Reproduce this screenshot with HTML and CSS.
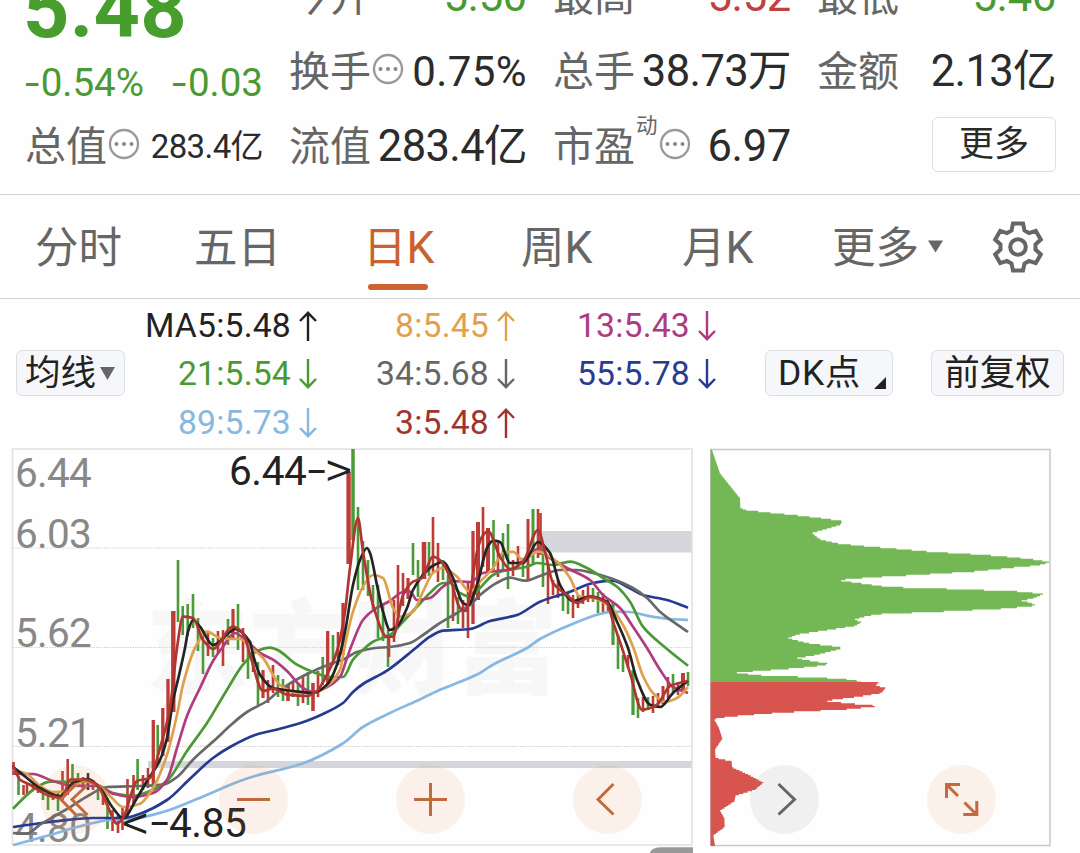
FILE: index.html
```html
<!DOCTYPE html>
<html lang="zh-CN">
<head>
<meta charset="utf-8">
<title>日K</title>
<link rel="stylesheet" href="styles.css">
</head>
<body>
<svg class="defs" width="0" height="0">
  <symbol id="up" viewBox="0 0 18 30"><path d="M9 30V2M1 10L9 1.8L17 10" fill="none" stroke="currentColor" stroke-width="2.4"/></symbol>
  <symbol id="down" viewBox="0 0 18 30"><path d="M9 0V28M1 20L9 28.2L17 20" fill="none" stroke="currentColor" stroke-width="2.4"/></symbol>
  <symbol id="dots" viewBox="0 0 32 32"><circle cx="16" cy="16" r="14" fill="none" stroke="#999" stroke-width="2.3"/><g fill="#888"><circle cx="8.5" cy="16" r="2"/><circle cx="16" cy="16" r="2"/><circle cx="23.5" cy="16" r="2"/></g></symbol>
</svg>

<header class="quote">
  <div class="price-col">
    <div class="price">5.48</div>
    <div class="change"><span class="pct"><i>-</i>0.54%</span><span><i>-</i>0.03</span></div>
    <div class="cell small"><span class="label">总值</span><svg class="info"><use href="#dots"/></svg><b>283.4亿</b></div>
  </div>
  <div class="col">
    <div class="cell"><span class="label">今开</span><b class="green">5.50</b></div>
    <div class="cell rate"><span class="label">换手</span><svg class="info"><use href="#dots"/></svg><b>0.75%</b></div>
    <div class="cell cap"><span class="label">流值</span><b>283.4亿</b></div>
  </div>
  <div class="col">
    <div class="cell"><span class="label">最高</span><b class="red">5.52</b></div>
    <div class="cell hands"><span class="label">总手</span><b>38.73万</b></div>
    <div class="cell"><span class="label">市盈</span><sup>动</sup><svg class="info"><use href="#dots"/></svg><b>6.97</b></div>
  </div>
  <div class="col">
    <div class="cell"><span class="label">最低</span><b class="green">5.46</b></div>
    <div class="cell hands"><span class="label">金额</span><b>2.13亿</b></div>
    <div class="cell end"><button class="more">更多</button></div>
  </div>
</header>

<nav class="tabs">
  <a class="t1">分时</a><a class="t2">五日</a><a class="t3 active">日<span class="k">K</span></a><a class="t4">周<span class="k">K</span></a><a class="t5">月<span class="k">K</span></a>
  <a class="t6">更多<svg class="caret" viewBox="0 0 16 13"><path d="M0 0H16L8 13Z" fill="#666"/></svg></a>
  <svg class="gear" viewBox="-26 -26 52 52"><g fill="none" stroke="#666" stroke-width="4"><path d="M-5-23.5H5L6.5-16.5L11-13.9L17.8-16.1L22.8-7.4L17.5-2.6V2.6L22.8 7.4L17.8 16.1L11 13.9L6.5 16.5L5 23.5H-5L-6.5 16.5L-11 13.9L-17.8 16.1L-22.8 7.4L-17.5 2.6V-2.6L-22.8-7.4L-17.8-16.1L-11-13.9L-6.5-16.5Z"/><circle r="7.8"/></g></svg>
</nav>

<section class="indicators">
  <button class="chip ma">均线<svg viewBox="0 0 15 13"><path d="M0 0H15L7.5 13Z" fill="#666"/></svg></button>
  <div class="ma-grid">
    <span class="c5">MA5:5.48<svg><use href="#up"/></svg></span>
    <span class="c8">8:5.45<svg><use href="#up"/></svg></span>
    <span class="c13">13:5.43<svg><use href="#down"/></svg></span>
    <span class="c21">21:5.54<svg><use href="#down"/></svg></span>
    <span class="c34">34:5.68<svg><use href="#down"/></svg></span>
    <span class="c55">55:5.78<svg><use href="#down"/></svg></span>
    <span class="c89">89:5.73<svg><use href="#down"/></svg></span>
    <span class="c3">3:5.48<svg><use href="#up"/></svg></span>
  </div>
  <button class="chip dk">DK点<svg viewBox="0 0 12 12"><path d="M12 0V12H0Z" fill="#222"/></svg></button>
  <button class="chip fq">前复权</button>
</section>

<main class="charts">
  <svg class="kline" viewBox="0 448 700 405">
    <text class="watermark" x="146" y="686" textLength="412">东方财富</text>
    <g class="grid"><path d="M13 548H692M13 647.5H692M13 746.5H692"/></g>
    <path class="band" d="M538 531H692V552.5H538ZM148 761H692V768H148Z"/>
    <path class="frame" d="M12.5 449H692V845H12.5Z"/>
    <g class="axis">
      <text x="15" y="486.5">6.44</text><text x="15" y="547.5">6.03</text><text x="15" y="647">5.62</text><text x="15" y="746.5">5.21</text><text x="15" y="841.5">4.80</text>
    </g>
    <g id="candles"></g>
    <g id="lines"></g>
    <g class="mark">
      <text x="229" y="484.5">6.44</text>
      <text transform="translate(307.500 483.500) scale(1.650 1)">-</text>
      <text class="arrow" x="326" y="488">&gt;</text>
      <text class="arrow" x="122" y="840.500">&lt;</text>
      <text transform="translate(150.500 836) scale(1.650 1)">-</text>
      <text x="169" y="837">4.85</text>
    </g>
    <path d="M650 853Q651 847.3 662 847.3H693V853Z" fill="#999"/>
    <g class="tools">
      <circle cx="75" cy="799.5" r="34.5"/><path d="M76 784L61 799.5L76 815M87.500 785L72 799.500L87.500 815"/>
      <circle cx="253.500" cy="799.5" r="34.5"/><path d="M237 799.5H270"/>
      <circle cx="430.5" cy="799.5" r="34.5"/><path d="M414 799.5H447M430.500 783V816"/>
      <circle cx="607.5" cy="799.5" r="34.5"/><path d="M613.500 784L598 799.500L613.500 814.500"/>
    </g>
  </svg>
  <svg class="chips" viewBox="700 448 380 405">
    <path class="chip-frame" d="M711 449.500H1050V845.500H711Z"/>
    <g id="distribution"></g>
    <g class="tools">
      <circle class="grey" cx="784.500" cy="799.5" r="34.5"/><path class="dark" d="M778.500 784L794.500 799.500L778.500 814.500"/>
      <circle cx="961.500" cy="799.5" r="34.5"/><path d="M960 784.500H946.500V798M947 785L958 796M963.300 814.500H976.800V801M976 814L964.500 802.500"/>
    </g>
  </svg>
</main>
<script src="chart.js"></script>
</body>
</html>
```
FILE: styles.css
```css
body { margin: 0; width: 1080px; height: 853px; overflow: hidden; background: #fefefe; color: #2b2b2b; font-family: Roboto, "Noto Sans CJK SC", sans-serif; }
.defs { position: absolute; }
b { font-weight: 400; }
i { font-style: normal; display: inline-block; transform: scaleX(1.35); transform-origin: left; margin-right: 5px; }
button { font: inherit; color: inherit; margin: 0; padding: 0; box-sizing: border-box; cursor: pointer; }

.quote { height: 194px; overflow: hidden; display: grid; grid-template-columns: 238px 238px 238px 239px; column-gap: 26px; padding-left: 25px; border-bottom: 1px solid #d4d4d4; }
.col, .price-col { margin-top: -41px; height: 225px; }
.cell { height: 75px; display: flex; align-items: center; justify-content: space-between; line-height: 75px; white-space: nowrap; }
.cell b { font-size: 43.5px; letter-spacing: -.3px; margin-left: auto; height: 75px; }
.label { color: #666; font-size: 41px; font-family: "Noto Sans CJK SC", sans-serif; font-weight: 400; height: 81px; }
.info { width: 32px; height: 32px; flex: none; position: relative; top: -3px; margin-left: 1px; }
.cell sup { font-size: 21.5px; color: #666; line-height: 24px; align-self: flex-start; margin-top: 5px; margin-left: 1px; vertical-align: baseline; }
.small b { font-size: 33px; letter-spacing: -.6px; }
.rate b { font-size: 42px; letter-spacing: .4px; }
.cap b { letter-spacing: -.6px; }
.hands b { letter-spacing: -.6px; }
.green { color: #4a9a33; }
.red { color: #c0413e; }
.end { justify-content: flex-end; }
.more { width: 124px; height: 55px; font-size: 35px; line-height: 48px; background: #fff; border: 1px solid #dedede; border-radius: 6px; position: relative; top: -2px; }
.price { height: 101px; line-height: 101px; font-size: 81px; font-weight: 700; color: #489e2d; letter-spacing: .3px; margin-left: -2px; }
.change { height: 49px; line-height: 45px; display: flex; justify-content: space-between; font-size: 38.5px; color: #4a9a33; letter-spacing: 0; white-space: nowrap; }
.change i { line-height: 1; }

.tabs { height: 103px; border-bottom: 1px solid #d4d4d4; display: flex; align-items: center; color: #666; font-size: 43.5px; white-space: nowrap; }
.tabs a { height: 103px; line-height: 107px; box-sizing: border-box; }
.k { font-size: 44.5px; line-height: 1; }
.t1 { margin-left: 35px; width: 159px; }
.t2 { width: 169px; }
.t3 { width: 158px; }
.t4 { width: 161px; }
.t5 { width: 150px; }
.t6 { width: 160px; }
.active { color: #c9622f; position: relative; }
.active::after { content: ""; position: absolute; left: 5px; bottom: 8px; width: 60px; height: 6px; border-radius: 3px; background: #cf6130; }
.caret { width: 15px; height: 13px; margin-left: 9px; vertical-align: 10px; }
.gear { width: 52px; height: 52px; }

.indicators { height: 149px; display: flex; align-items: center; padding-left: 16px; box-sizing: border-box; }
.chip { height: 46px; font-size: 35.5px; line-height: 40px; background: #f6f7fa; border: 1px solid #dcdfe2; border-radius: 6px; white-space: nowrap; color: #222; display: flex; align-items: center; position: relative; top: -.5px; }
.ma { width: 109px; padding-left: 8px; }
.ma svg { width: 15px; height: 13px; margin-left: 4px; }
.dk { width: 128px; margin-left: 49px; padding-left: 12px; letter-spacing: .6px; }
.dk svg { position: absolute; right: 6px; bottom: 6px; width: 12px; height: 12px; }
.fq { width: 133px; margin-left: 38px; justify-content: center; }
.ma-grid { display: grid; grid-template-columns: 192px 198px 201px; grid-auto-rows: 48.5px; }
.ma-grid span { display: flex; justify-content: flex-end; align-items: center; font-size: 33.7px; letter-spacing: .2px; gap: 8px; white-space: nowrap; }
.ma-grid svg { width: 18px; height: 30px; flex: none; position: relative; top: .5px; }
.c5 { color: #222; } .c8 { color: #e0a04c; } .c13 { color: #ae3b7f; } .c21 { color: #4a9a33; }
.c34 { color: #666; } .c55 { color: #2a3b90; } .c89 { color: #87b8e0; } .c3 { color: #a03530; }

.charts { display: flex; height: 405px; }
.kline { width: 700px; height: 405px; flex: none; }
.chips { width: 380px; height: 405px; flex: none; }
.watermark { font: 900 102px "Noto Sans CJK SC", sans-serif; fill: #f7f7f8; }
.grid { stroke: #ccc; stroke-width: 1; stroke-dasharray: 1.300 1.300; }
.band { fill: #d5d6dc; }
.frame { fill: none; stroke: #e1e1e1; stroke-width: 1.6; }
.chip-frame { fill: none; stroke: #c8c8c8; stroke-width: 1.5; }
.axis { font-size: 40.5px; fill: #888; letter-spacing: -.7px; }
.mark { font-size: 40.5px; fill: #222; letter-spacing: -.4px; }
.arrow { font-family: "Noto Sans CJK SC", sans-serif; font-size: 47px; font-weight: 350; }
.candle { stroke-width: 2.6; }
.line { fill: none; stroke-width: 2.7; stroke-linejoin: round; }
.tools circle { fill: #e0803c; fill-opacity: .1; }
.tools path { fill: none; stroke: #c4693e; stroke-width: 3; }
.tools .grey { fill: #777; }
.tools .dark { stroke: #666; }
```
FILE: chart.js
```js
const NS = "http://www.w3.org/2000/svg";
function add(parent, d, cls, attrs) {
  const p = document.createElementNS(NS, "path");
  p.setAttribute("d", d);
  if (cls) p.setAttribute("class", cls);
  for (const k in attrs) p.setAttribute(k, attrs[k]);
  document.getElementById(parent).appendChild(p);
}
const pairs = s => s.trim().split(/\s+/).map(p => p.split(",").map(Number));

// Candles: x, high, low, colour, optional width
const candles = `13.5,762,775,r 18.5,776,795,g 23.5,785,795,r 27,783,794,r 33,783,790,r 38,784,793,r 43,787,800,g 48,790,810,g 53,792,800,r 58,793,811,g 62.5,771,800,r 67.7,759,795,r 72.5,764,785,g 78,773,786,g 83,777,790,r 88,773,790,k 93,780,790,r 98,785,800,g 103,788,805,r 107.5,798,829,g 112.5,810,831,r 118,815,833,r 122.5,808,830,r 127.500,779,818,r 133.500,775,805,r 137.600,759,790,g 143,775,790,r 148,768,788,r 153.300,720,785,r,3.300 157.700,725,764,g 162.800,708,756,r,3.300 168,679,742,r,3.400 173.300,611,712,r,4.400 178,560,622,g 182.700,606,635,g 187.700,604,636,g 193,594,628,g 198,618,651,g 203,630,674,g 208,632,656,r 213,638,657,g 218,631,653,r 223,630,666,r 228,619,645,g 233,609,640,r,3.200 238,604,650,g 243,628,662,r 248,640,679,g 253,652,672,r 258,662,706,g 263,670,698,r,3.200 268,680,703,r 273,665,693,r 278,675,697,g 283,679,701,g 288,685,701,r,3.600 293,682,697,r 298,683,706,g 303,676,703,r 308,672,705,g 313,683,711,r,3.600 318,671,697,r 322.700,657,685,g 327.700,631,684,r,3.300 333,635,665,g 338,632,665,r 343,603,655,r,3.300 348.600,472,564,r,4.400 353,449,540,g,3.500 358,507,590,g 363,541,590,g 368,560,596,g 373,585,609,g 378,585,638,g 383,605,641,g 388,630,667,g 389,634,657,r 394,600,642,r 398,565,622,r 403,573,606,r 408,578,599,r,3.200 413,543,575,g 418,560,597,g 424,542,579,r,4.500 429,542,576,g 433,517,572,r 438,543,582,r 443,560,580,g 448,575,628,g 453,588,621,r 458,597,624,g 463,600,628,r 468,582,638,r 473,531,624,r,3.300 478,522,600,r,4 483,507,567,r 488,528,571,r,4 493.500,520,570,g 498,540,577,r 503,533,570,g 508,524,589,g 513,560,576,r 518,546,568,r 523,558,577,g 528,519,580,r,3 533,509,563,g,3 538,509,558,r 540.500,513,555,r 543,545,587,g 548,565,604,r 553,580,595,r 558,580,598,r 563,590,611,g 568,592,614,g 573,595,618,r 578,595,608,r 583,590,604,r 588,586,602,r 593,588,602,g 598,592,613,g 603,593,612,r 608,598,612,r 613,603,645,g,3.200 618,635,669,g 623,655,672,g 628,655,668,r 633,670,715,g,3.300 638,698,718,g 643,697,712,r 648,697,710,g 653,696,713,r 658,693,707,r 663,686,704,r,3 668,677,698,r 673,674,692,g 678,682,695,r 683,673,690,r,4 688,672,686,g`;
const tint = { r: "#bd3c35", g: "#4b9938", k: "#333" };
for (const row of candles.split(/\s+/)) {
  const [x, top, low, c, w] = row.split(",");
  add("candles", `M${x} ${top}V${low}`, "candle", w ? { stroke: tint[c], style: `stroke-width:${w}` } : { stroke: tint[c] });
}

// Moving averages, longest period first
const averages = [
  ["#86b8e2", "13,845 50,835 77,827 110,820 133,818.7 163,812 197,799 240,781 255,776 302,763.7 342,744 363,727 390,713 417,700.7 440,689.7 467,679 480,673 493,664.7 527,648 540,639 570,625 600,614 613,611.7 630,612 647,615.7 670,619 688,620"],
  ["#263a91", "13,827 50,822 93,818 123,818 140,813.7 167,800 190,778.7 213,758 230,747 255,735 283,728 307,720.7 323,714 343,703 353,692 363,684 387,670.7 417,647 430,636.7 443,630.7 470,629 490,621 517,615 540,601.7 570,591.7 593,583 613,580.7 627,586.7 643,595 667,600 688,607.7"],
  ["#686868", "13,833 27,833.7 40,824.7 67,809 90,794.7 107,787 140,786 163,784.7 177,777 193,759.7 217,738 230,725.7 247,712 267,701 280,690 303,676 330,664 343,659.7 357,652 375,648 390,647 410,643 423,635 437,625 457,613 470,605 480,595 497,582.7 510,577.7 525,580.7 540,576 560,570 577,570 593,573 613,579 633,588 647,598 660,611.7 673,621.7 688,632"],
  ["#4a9934", "13,808.7 33,790 50,781.7 87,782 100,786 113,793 133,795.7 150,791 167,781 187,751 207,723 227,689.7 243,664.7 257,651 270,647.7 277,649.7 297,664.7 313,672 330,677 343,677 353,659.7 363,649.7 373,641.7 390,635 403,621.7 417,606.7 430,593 443,583 450,583 460,593 470,596.7 480,588 493,575 503,571 527,566.7 537,563 553,565 570,561.7 587,568 603,578 617,586.7 630,601.7 643,626.7 667,649 688,665.7"],
  ["#b23b7d", "13,773.7 33,774 53,781 73,785.7 97,786 113,793.7 133,797 153,793 167,779.7 177,748 187,716 200,688 213,661 222,648 235,633 242,637 253,646.7 260,653 273,659.7 287,671 303,688 313,692 327,687 340,677 347,658 353,641.7 363,620 377,607.7 390,601 403,592 410,591.7 417,600 430,598 443,586.7 453,581 470,582 483,573 497,571 513,569 523,560 538,549 550,558 567,568 590,580 603,595 620,608 633,626.7 647,648 660,669.7 673,687 688,693"],
  ["#dfa04d", "13,769.7 27,774 40,786 53,792 67,791 83,781 97,784.7 110,796 123,807 140,803.7 153,788 167,754.7 177,714.7 183,684.7 195,648 207,631.7 220,638 230,639 240,639 250,646.7 263,658 280,685 297,693 313,693 327,686 340,669.7 345,645 353,611.7 363,586.7 373,575 383,578 393,608 400,616.7 413,611.7 423,591.7 433,573 443,568 457,576.7 470,591.7 480,581.7 493,568 503,553 513,551.7 523,560 538,551.7 557,561.7 570,578 580,596.7 593,598 610,606.7 623,625 633,646.7 643,676 653,693 665,702 677,698 688,687"],
  ["#242424", "13,767 27,778 40,788 60,796 73,783 88,779 100,788 113,808 123,818 137,798 147,781 160,760 167,738 173,701 180,671 185,648 188,631.7 193,620 200,626.7 213,645 230,632 235,629 250,641.7 253,654.7 260,674.7 273,688 293,691 313,693 327,684.7 337,664.7 345,631.7 353,585 360,560 367,548 370,553 377,585 383,611.7 390,630 397,626.7 407,608 413,590 423,575 433,565.7 443,562 453,578 463,603 468,605 477,585 487,548 493,540.7 500,542 510,563 523,563 538,542 550,553 560,585 573,601 590,596.7 607,601.7 617,621.7 628,648 637,679.7 650,704.7 660,707 673,693 688,680.7"],
  ["#b03530", "13,765 20,779.7 30,784.7 50,796 62,798 70,779.7 83,779.7 97,784.7 107,804.7 117,823.7 123,818 137,781 150,778 160,748 170,708 177,648 183,616.7 193,618 203,640 213,649 233,626.7 243,633 250,654.7 263,691 273,688.7 287,694.7 307,696 317,691 327,674.7 337,651 345,611.7 350,568 358,518 363,551.7 373,605 387,636.7 393,636.7 403,595 413,581.7 422,578 433,556.7 443,563 450,578 460,608 466,611 469,600 477,551.7 482,536.7 488,531 500,556.7 510,569 523,561.7 538,530 545,551.7 553,583 567,595 577,603 590,596.7 607,603 613,621.7 622,648 630,673 642,709.7 657,704.7 670,686 688,680.7"]
];
// Monotone cubic interpolation keeps the averages free of overshoot
function curve(p) {
  const n = p.length, m = [], s = [];
  for (let i = 0; i < n - 1; i++) s[i] = (p[i + 1][1] - p[i][1]) / (p[i + 1][0] - p[i][0]);
  m[0] = s[0];
  m[n - 1] = s[n - 2];
  for (let i = 1; i < n - 1; i++) m[i] = s[i - 1] * s[i] <= 0 ? 0 : 2 * s[i - 1] * s[i] / (s[i - 1] + s[i]);
  let d = `M${p[0]}`;
  for (let i = 0; i < n - 1; i++) {
    const h = (p[i + 1][0] - p[i][0]) / 3;
    d += `C${p[i][0] + h},${p[i][1] + m[i] * h} ${p[i + 1][0] - h},${p[i + 1][1] - m[i + 1] * h} ${p[i + 1]}`;
  }
  return d;
}
for (const [colour, pts] of averages) add("lines", curve(pairs(pts)), "line", { stroke: colour });

// Cost distribution: width and height in thirds of a pixel from the panel origin
function steps(pts, y0, y1, oy) {
  const p = pairs(pts).map(([x, y]) => [700 + x / 3, oy + y / 3]);
  let d = `M710.5 ${y0}`;
  for (let y = y0; y < y1; y += 1.333) {
    const yc = y + 0.66;
    let i = 0;
    while (i < p.length - 2 && p[i + 1][1] < yc) i++;
    const [a, b] = [p[i], p[i + 1]];
    const t = Math.max(0, Math.min(1, (yc - a[1]) / (b[1] - a[1])));
    const x = a[0] + (b[0] - a[0]) * t;
    d += `L${x.toFixed(1)} ${y.toFixed(2)}V${Math.min(y1, y + 1.333).toFixed(2)}`;
  }
  return d + `L710.5 ${y1}Z`;
}
add("distribution", steps("35,12 60,85 120,160 121,188 135,195 207,203 280,210 352,218 428,228 420,240 365,256 335,264 360,283 410,295 487,303 585,311 687,320 822,328 897,333 948,338 1015,345 1050,352 1010,362 955,366 830,379 680,388 517,397 440,403 413,406 497,417 565,426 793,433 967,440 1030,447 1000,460 963,467 990,473 1011,482 910,491 740,499 620,504 530,508 485,517 463,524 485,532 465,543 350,560 295,568 263,580 330,596 421,606 421,612 345,631 287,640 340,649 393,657 340,665 258,672 108,683 175,691 340,697 430,702 483,709", 449.5, 682, 445), "", { fill: "#74b856" });
add("distribution", steps("538,101 527,113 556,120 545,135 470,147 372,159 465,168 545,174 440,184 242,194 135,202 80,207 42,213 57,240 67,272 45,305 47,330 95,340 96,358 145,380 190,404 165,425 107,443 103,460 60,488 73,510 74,537 40,562 45,594", 682, 846, 648), "", { fill: "#d8554f" });
```
